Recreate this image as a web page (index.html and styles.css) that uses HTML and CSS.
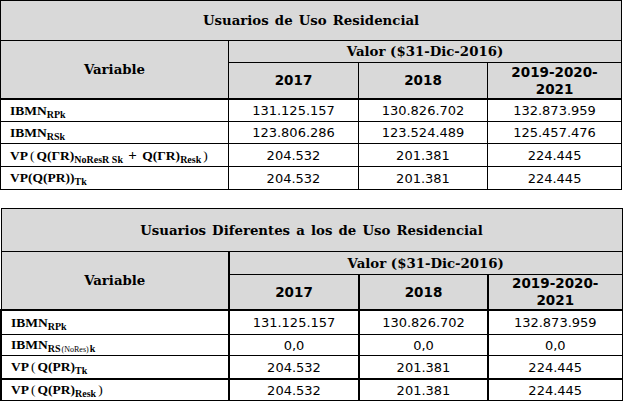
FILE: index.html
```html
<!DOCTYPE html>
<html lang="es">
<head>
<meta charset="utf-8">
<title>Usuarios</title>
<link rel="stylesheet" href="styles.css">
</head>
<body>
<div class="page">
  <table class="grid grid-a">
    <colgroup><col class="c1"><col class="c2"><col class="c3"><col class="c4"></colgroup>
    <tr class="r-title"><th colspan="4" class="title">Usuarios de Uso Residencial</th></tr>
    <tr class="r-valor"><th rowspan="2" class="var">Variable</th><th colspan="3" class="valor">Valor ($31-Dic-2016)</th></tr>
    <tr class="r-years"><th class="yr">2017</th><th class="yr">2018</th><th class="yr">2019-2020-<br>2021</th></tr>
    <tr class="r-d1 first"><td class="lbl">IBMN<sub>RPk</sub></td><td>131.125.157</td><td>130.826.702</td><td>132.873.959</td></tr>
    <tr class="r-d2"><td class="lbl">IBMN<sub>RSk</sub></td><td>123.806.286</td><td>123.524.489</td><td>125.457.476</td></tr>
    <tr class="r-d3"><td class="lbl">VP<span class="p sp">(</span>Q(ΓR)<sub>NoResR Sk</sub> <span class="plus">+</span> Q(ΓR)<sub>Resk</sub><span class="p sp">)</span></td><td>204.532</td><td>201.381</td><td>224.445</td></tr>
    <tr class="r-d4"><td class="lbl">VP(Q(PR))<sub>Tk</sub></td><td>204.532</td><td>201.381</td><td>224.445</td></tr>
  </table>

  <table class="grid grid-b">
    <colgroup><col class="c1"><col class="c2"><col class="c3"><col class="c4"></colgroup>
    <tr class="r-title"><th colspan="4" class="title">Usuarios Diferentes a los de Uso Residencial</th></tr>
    <tr class="r-valor"><th rowspan="2" class="var">Variable</th><th colspan="3" class="valor">Valor ($31-Dic-2016)</th></tr>
    <tr class="r-years"><th class="yr">2017</th><th class="yr">2018</th><th class="yr">2019-2020-<br>2021</th></tr>
    <tr class="b-d1 first"><td class="lbl">IBMN<sub>RPk</sub></td><td>131.125.157</td><td>130.826.702</td><td>132.873.959</td></tr>
    <tr class="b-d2"><td class="lbl">IBMN<sub>RS<span class="sm">(NoRes)</span>k</sub></td><td>0,0</td><td>0,0</td><td>0,0</td></tr>
    <tr class="b-d3"><td class="lbl">VP<span class="p sp">(</span>Q(PR)<sub>Tk</sub></td><td>204.532</td><td>201.381</td><td>224.445</td></tr>
    <tr class="b-d4 thick"><td class="lbl">VP<span class="p sp">(</span>Q(PR)<sub>Resk</sub><span class="p sp">)</span></td><td>204.532</td><td>201.381</td><td>224.445</td></tr>
  </table>
</div>
</body>
</html>
```

FILE: styles.css
```css
html, body {
  margin: 0;
  padding: 0;
  background: #ffffff;
}

.page {
  display: flex;
  flex-direction: column;
  gap: 18px;
  padding: 0;
}

.grid {
  border-collapse: collapse;
  table-layout: fixed;
  width: 621px;
  color: #000;
}

.c1 { width: 228px; }
.c2 { width: 130px; }
.c3 { width: 129px; }
.c4 { width: 134px; }

.grid th,
.grid td {
  border: 1px solid #000;
  padding: 0;
  text-align: center;
  vertical-align: middle;
}

.grid th {
  background: #d9d9d9;
}

.title,
.var,
.valor {
  font-family: "DejaVu Serif", serif;
  font-weight: bold;
  font-size: 13.3px;
}

.title {
  font-size: 13.3px;
  word-spacing: 1.5px;
}

.yr {
  font-family: "DejaVu Sans", sans-serif;
  font-weight: bold;
  font-size: 13.5px;
  line-height: 17px;
}

.grid td {
  font-family: "DejaVu Sans", sans-serif;
  font-size: 13px;
}

.grid td.lbl {
  text-align: left;
  padding-left: 9px;
  font-family: "Liberation Serif", serif;
  font-weight: bold;
  font-size: 13.5px;
  white-space: nowrap;
}

.lbl sub {
  font-size: 10px;
  vertical-align: -3px;
  line-height: 0;
}

.lbl .sm {
  font-size: 8px;
  font-weight: normal;
  margin: 0 1px;
}

.lbl .p {
  font-weight: normal;
}

.lbl .sp {
  margin: 0 2px;
}

.lbl .plus {
  font-size: 15px;
  margin: 0 2px;
}

.grid .first td {
  border-top: 2px solid #000;
}

.grid-b th.var,
.grid-b td:first-child {
  border-right: 2px solid #000;
}

.grid-b .yr,
.grid-b td {
  border-left-width: 2px;
}

.grid-b .thick td {
  border-top: 2px solid #000;
}

.grid-a .r-title th { height: 39px; }
.grid-a .r-valor th.valor { height: 21px; }
.grid-a .r-years th { height: 35px; }
.grid-a .r-d1 td { height: 21px; }
.grid-a .r-d2 td { height: 21px; }
.grid-a .r-d3 td { height: 22px; }
.grid-a .r-d4 td { height: 22px; }

.grid-b .r-title th { height: 42px; }
.grid-b .r-valor th.valor { height: 22px; }
.grid-b .r-years th { height: 34px; }
.grid-b .b-d1 td { height: 23px; }
.grid-b .b-d2 td { height: 20px; }
.grid-b .b-d3 td { height: 22px; }
.grid-b .b-d4 td { height: 20px; }
```
